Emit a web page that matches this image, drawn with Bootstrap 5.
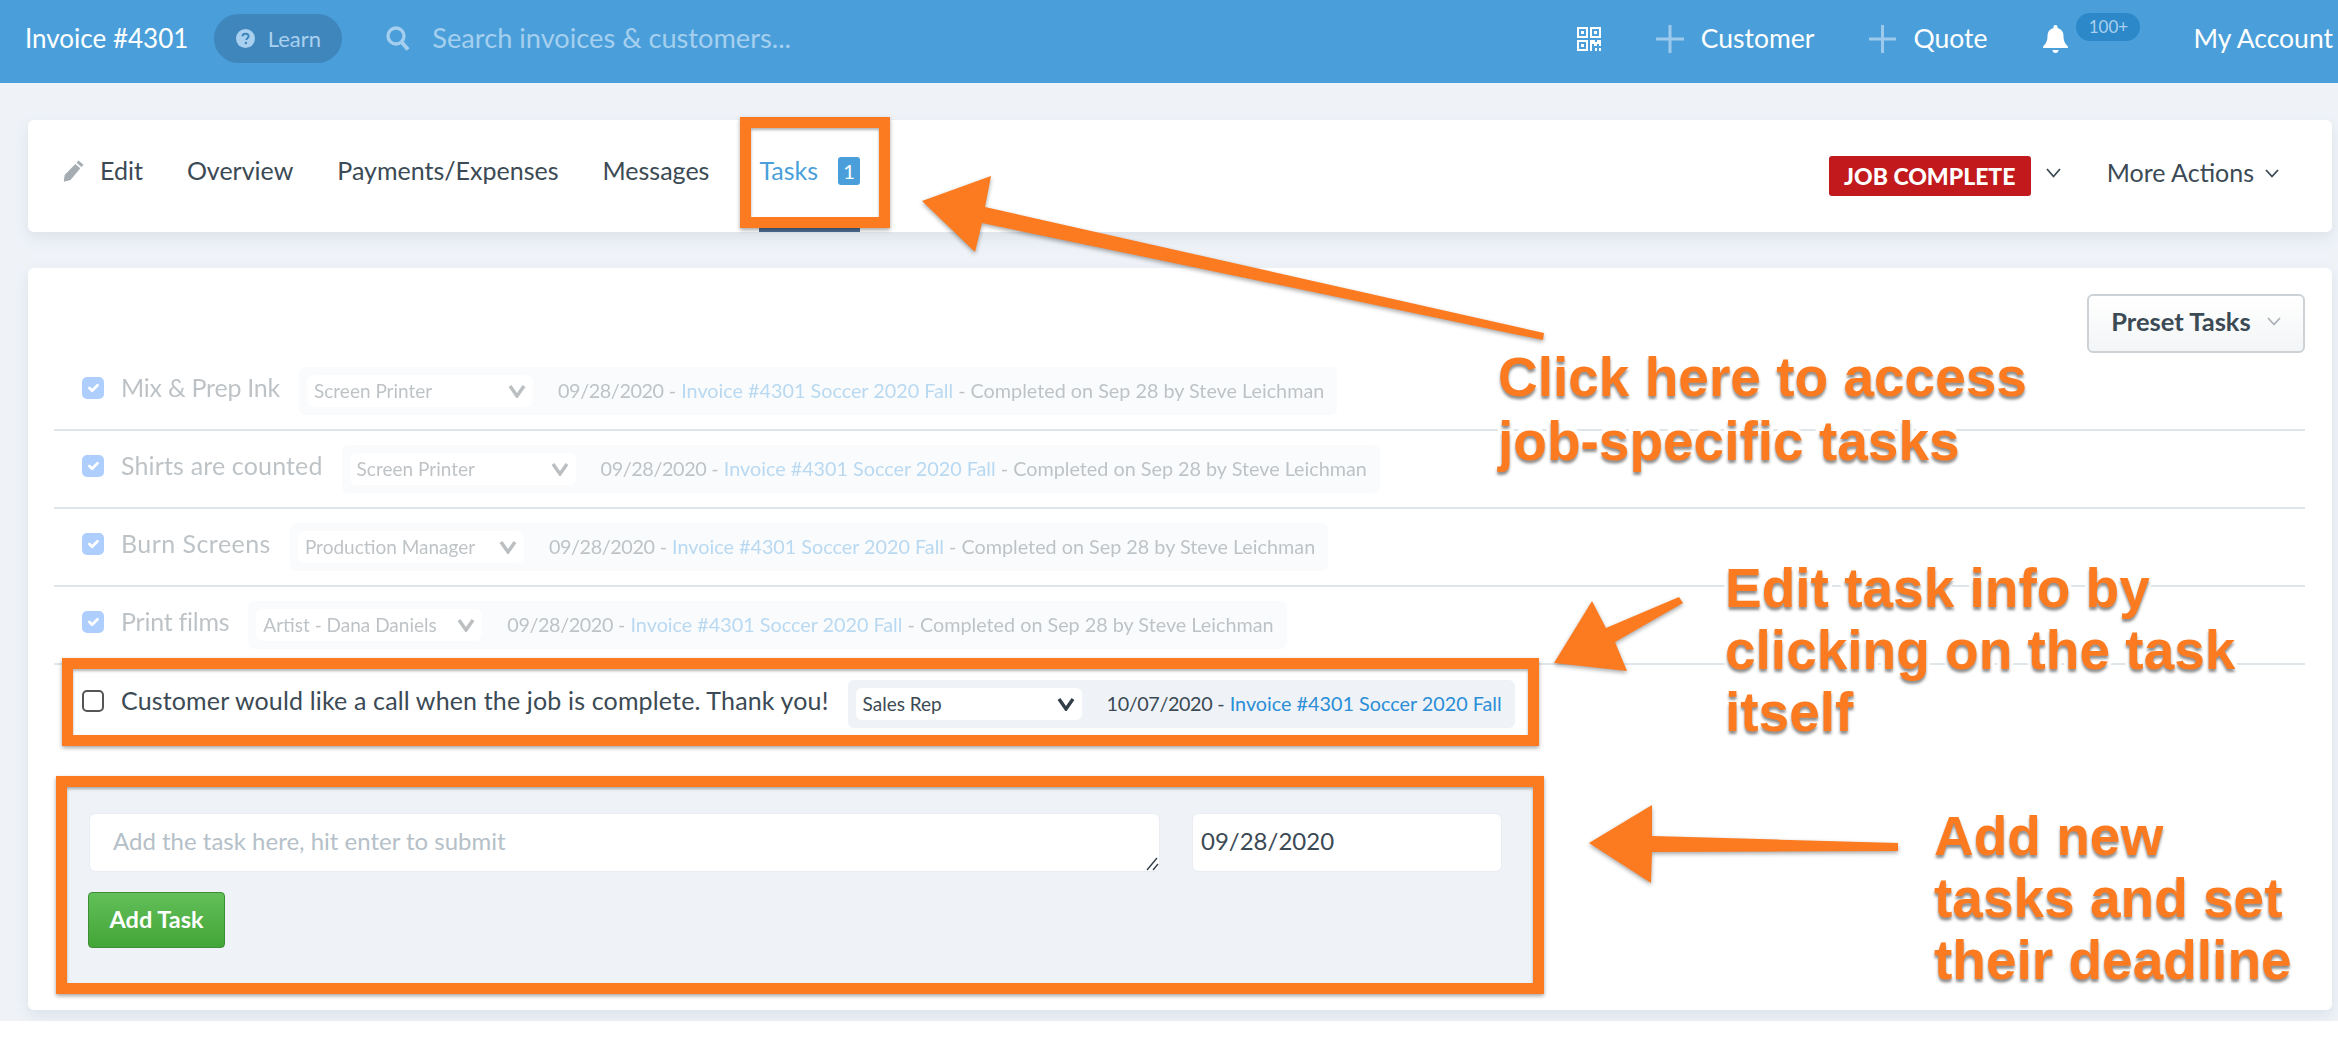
<!DOCTYPE html>
<html lang="en">
<head>
  <meta charset="UTF-8">
  <title>Invoice #4301 - Tasks</title>
  <meta name="viewport" content="width=device-width, initial-scale=1">
  <link href="https://cdn.jsdelivr.net/npm/bootstrap@5.3.0/dist/css/bootstrap.min.css" rel="stylesheet">
  <style>
    body {
      background: #fff;
      font-family: Lato, "Liberation Sans", sans-serif;
      color: #3b4a54;
      position: relative;
      overflow: hidden;
    }
    .page-wrap {
      background: #eff3f8;
      height: 1021px;
      overflow: hidden;
    }
    /* top bar */
    .top-bar {
      background: #4a9fda;
      height: 83px;
      padding: 0 5px 6px 25px;
      flex-wrap: nowrap;
    }
    .top-title { color: #fff; font-size: 26px; }
    .learn-pill {
      width: 128px;
      height: 49px;
      margin-left: 26px;
      border-radius: 25px;
      background: #3f86bd;
      color: #a9d0ee;
      font-size: 22px;
      gap: 13px;
    }
    .search-box { margin-left: 44px; gap: 22px; color: #a5cfee; font-size: 27.2px; }
    .top-item { color: #fff; font-size: 26.5px; gap: 17px; text-decoration: none; }
    .top-item:hover { color: #fff; }
    .top-add { margin-left: 55px; }
    .bell-wrap { margin-left: 56px; margin-right: 53px; position: relative; width: 97px; height: 28px; }
    .bell-count {
      position: absolute;
      left: 33px;
      top: -12px;
      width: 64px;
      height: 28px;
      border-radius: 14px;
      background: #2d88c9;
      color: #a9d0ee;
      font-size: 17px;
      line-height: 28px;
      text-align: center;
    }
    /* cards */
    .sub-card {
      margin: 37px 6px 0 28px;
      height: 112px;
      background: #fff;
      border-radius: 6px;
      box-shadow: 0 6px 14px rgba(120, 140, 160, .16);
      padding: 0 53px 0 35px;
    }
    .sub-tabs { gap: 44px; height: 100%; flex-wrap: nowrap; }
    .sub-link {
      padding: 0 0 6px;
      color: #3b4a54;
      font-size: 25px;
      height: 100%;
      display: flex;
      align-items: center;
      gap: 16px;
      border-bottom: 4px solid transparent;
    }
    .sub-link:hover { color: #3b4a54; }
    .sub-link.is-current {
      margin-left: 6px;
      gap: 20px;
      color: #4a9fda;
      border-bottom-color: #4d6f94;
    }
    .tab-count {
      width: 22px;
      height: 28px;
      border-radius: 3px;
      background: #4a9fda;
      color: #fff;
      font-size: 20px;
      line-height: 28px;
      text-align: center;
    }
    .job-status {
      width: 202px;
      height: 40px;
      background: #c1191c;
      border-radius: 3px;
      color: #fff;
      font-size: 23px;
      font-weight: 900;
      line-height: 40px;
      text-align: center;
    }
    .more-actions { color: #3b4a54; font-size: 25px; gap: 11px; margin-left: 46px; padding-bottom: 6px; }
    .job-caret { margin: 0 0 6px 15px; }
    .main-card {
      margin: 36px 6px 0 28px;
      height: 742px;
      background: #fff;
      border-radius: 6px;
      box-shadow: 0 6px 14px rgba(120, 140, 160, .16);
      padding: 26px 27px 0 26px;
    }
    .preset-btn.btn {
      width: 218px;
      height: 59px;
      padding: 0 0 4px;
      border: 2px solid #ccd2d6;
      border-radius: 6px;
      background: linear-gradient(#fff, #f3f5f6);
      color: #3b4a54;
      font-size: 25.5px;
      font-weight: 700;
      gap: 16px;
    }
    /* task rows */
    .task-row {
      height: 78px;
      padding-left: 28px;
      border-bottom: 2px solid #dfe6ea;
    }
    .task-row.last-row { border-bottom: 0; }
    .row-inner { gap: 19px; white-space: nowrap; }
    .is-done .row-inner { opacity: .33; }
    .task-check.form-check-input {
      width: 22px;
      height: 22px;
      margin: 0 -2px 6px 0;
      border: 2px solid #555;
      border-radius: 5px;
    }
    .task-check.form-check-input:checked { border-color: #0d6efd; }
    .task-text { font-size: 25px; letter-spacing: .15px; color: #3b4a54; padding-bottom: 6px; }
    .task-text.is-tight { letter-spacing: -.25px; }
    .task-text.is-loose { letter-spacing: .45px; }
    .task-meta {
      height: 48px;
      padding: 0 13px 0 8px;
      background: #eff3f8;
      border-radius: 6px;
      gap: 25px;
      font-size: 19.8px;
    }
    .task-date { letter-spacing: -.4px; }
    .task-meta a { color: #2b8ed6; text-decoration: none; }
    .role-select.form-select {
      width: 226px;
      height: 32px;
      padding: 0 30px 0 7px;
      border: 0;
      border-radius: 6px;
      font-size: 19px;
      color: #3b4a54;
      background-position: right 7px center;
      background-size: 18px 14px;
      background-image: url("data:image/svg+xml,%3csvg xmlns='http://www.w3.org/2000/svg' viewBox='0 0 18 14'%3e%3cpath fill='none' stroke='%23333f48' stroke-width='3.4' d='M2 2l7 10 7-10'/%3e%3c/svg%3e");
    }
    /* add form */
    .add-panel {
      width: 1488px;
      height: 218px;
      margin: 33px 0 0 2px;
      padding: 37px 0 0 33px;
      background: #eff3f8;
    }
    .add-fields { gap: 32px; }
    .add-task.form-control,
    .add-date.form-control {
      height: 59px;
      min-height: 59px;
      border: 1px solid #e9edf1;
      border-radius: 6px;
      font-size: 24px;
      color: #3b4a54;
    }
    .add-task.form-control { width: 1071px; padding: 9px 23px; resize: both; }
    .add-task.form-control::placeholder { color: #b5c0c8; }
    .add-task::-webkit-resizer {
      background: url("data:image/svg+xml,%3csvg xmlns='http://www.w3.org/2000/svg' viewBox='0 0 15 15'%3e%3cpath fill='none' stroke='%23333f48' stroke-width='1.4' d='M3 14L13 2M9 14l5-6'/%3e%3c/svg%3e") no-repeat center;
    }
    .add-date.form-control { width: 310px; padding: 0 8px 4px; }
    .add-btn.btn {
      display: block;
      width: 137px;
      height: 56px;
      margin: 20px 0 0 -1px;
      padding: 0;
      border: 1px solid #3d8f33;
      border-radius: 4px;
      background: linear-gradient(#62bf59, #43a537);
      color: #fff;
      font-size: 23.5px;
      font-weight: 700;
    }
    /* annotations drawn over the screenshot */
    .anno-layer { position: absolute; left: 0; top: 0; width: 2338px; height: 1040px; pointer-events: none; }
    .anno-frame {
      position: absolute;
      border: 11px solid #fd7b20;
      box-shadow: 0 2px 4px rgba(0, 0, 0, .35), inset 0 2px 3px rgba(0, 0, 0, .3);
    }
    .frame-tab { left: 740px; top: 117px; width: 150px; height: 111px; }
    .frame-task { left: 62px; top: 658px; width: 1477px; height: 88px; }
    .frame-add { left: 56px; top: 776px; width: 1488px; height: 218px; }
    .anno-arrows { position: absolute; left: 0; top: 0; filter: drop-shadow(0 2px 2px rgba(0, 0, 0, .35)); }
    .anno-text {
      position: absolute;
      margin: 0;
      color: #fd7b20;
      font-family: "Liberation Sans", Arial, sans-serif;
      font-weight: 700;
      font-size: 55px;
      line-height: 62px;
      white-space: nowrap;
      -webkit-text-stroke: 8px #fff;
      paint-order: stroke fill;
      text-shadow: 0 3px 3px rgba(0, 0, 0, .45);
    }
    .text-click { left: 1498px; top: 345px; line-height: 64px; }
    .text-edit { left: 1725px; top: 557px; }
    .text-add { left: 1934px; top: 805px; }
  </style>
</head>
<body>

<div class="page-wrap">

  <!-- Top bar -->
  <nav class="navbar top-bar">
    <div class="d-flex align-items-center">
      <span class="top-title">Invoice #4301</span>
      <span class="learn-pill d-flex align-items-center justify-content-center">
        <svg width="19" height="19" viewBox="0 0 19 19"><circle cx="9.5" cy="9.5" r="9.5" fill="#a9d0ee"/><path d="M6.4 7.3c.2-1.8 1.5-2.6 3.2-2.6 1.8 0 3 1 3 2.5 0 2-2.3 2.1-2.3 3.8" fill="none" stroke="#3f86bd" stroke-width="2"/><circle cx="9.9" cy="14" r="1.3" fill="#3f86bd"/></svg>
        Learn
      </span>
      <div class="search-box d-flex align-items-center">
        <svg width="24" height="25" viewBox="0 0 24 25"><circle cx="10" cy="10" r="8" fill="none" stroke="#a5cfee" stroke-width="3.4"/><path d="M15.5 16l6.5 7.5" stroke="#a5cfee" stroke-width="4"/></svg>
        <span>Search invoices &amp; customers...</span>
      </div>
    </div>
    <div class="d-flex align-items-center">
      <svg width="24" height="24" viewBox="0 0 24 24" fill="#fff">
        <path fill-rule="evenodd" d="M0 0h11v11H0zM2 2v7h7V2zM13 0h11v11H13zM15 2v7h7V2zM0 13h11v11H0zM2 15v7h7v-7z"/>
        <path d="M4 4h3v3H4zM17 4h3v3h-3zM4 17h3v3H4zM13 13h5v2h2v-2h4v6h-2v-2h-2v2h-3v-2h-2v7h-2zM18 21h2v3h-2zM22 21h2v3h-2z"/>
      </svg>
      <a class="top-item top-add d-flex align-items-center" href="#">
        <svg width="28" height="28" viewBox="0 0 28 28"><path d="M14 0v28M0 14h28" stroke="#9dcaec" stroke-width="3"/></svg>
        Customer
      </a>
      <a class="top-item top-add d-flex align-items-center" href="#">
        <svg width="27" height="28" viewBox="0 0 27 28"><path d="M13.5 0v28M0 14h27" stroke="#9dcaec" stroke-width="3"/></svg>
        Quote
      </a>
      <div class="bell-wrap">
        <svg width="25" height="28" viewBox="0 0 25 28"><path fill="#fff" d="M12.5 0c1.2 0 2 .8 2 2v1c4 1 6 4.300 6 8 0 5 1.500 7.500 4.500 10.500v1.500H0v-1.500C3 18.500 4.500 16 4.500 11c0-3.700 2-7 6-8V2c0-1.200.8-2 2-2z"/><path fill="#fff" d="M9.500 25h6c0 1.800-1.300 3-3 3s-3-1.200-3-3z"/></svg>
        <span class="bell-count">100+</span>
      </div>
      <a class="top-item" href="#">My Account</a>
    </div>
  </nav>

  <!-- Sub navigation -->
  <div class="sub-card d-flex justify-content-between align-items-stretch">
    <ul class="nav sub-tabs">
      <li class="nav-item">
        <a class="nav-link sub-link" href="#">
          <svg width="21" height="22" viewBox="0 0 21 22"><path fill="#a5adb2" d="M15.500.5l5 4.200-2 2.300-5-4.200zM12.300 4l5 4.200L7.500 20 .8 21.800 1.600 15z"/></svg>
          Edit
        </a>
      </li>
      <li class="nav-item"><a class="nav-link sub-link" href="#">Overview</a></li>
      <li class="nav-item"><a class="nav-link sub-link" href="#">Payments/Expenses</a></li>
      <li class="nav-item"><a class="nav-link sub-link" href="#">Messages</a></li>
      <li class="nav-item"><a class="nav-link sub-link is-current" href="#">Tasks <span class="tab-count">1</span></a></li>
    </ul>
    <div class="d-flex align-items-center">
      <span class="job-status">JOB COMPLETE</span>
      <svg class="job-caret" width="15" height="10" viewBox="0 0 15 10"><path d="M1 1l6.500 7.500L14 1" fill="none" stroke="#3b4a54" stroke-width="1.800"/></svg>
      <div class="more-actions d-flex align-items-center">
        More Actions
        <svg width="14" height="9" viewBox="0 0 14 9"><path d="M1 1l6 6.500L13 1" fill="none" stroke="#3b4a54" stroke-width="1.800"/></svg>
      </div>
    </div>
  </div>

  <!-- Tasks -->
  <div class="main-card">
    <div class="d-flex justify-content-end">
      <button type="button" class="btn preset-btn d-flex align-items-center justify-content-center">
        Preset Tasks
        <svg width="14" height="9" viewBox="0 0 14 9"><path d="M1 1l6 6.500L13 1" fill="none" stroke="#aab3b9" stroke-width="1.800"/></svg>
      </button>
    </div>

    <div class="task-row is-done d-flex align-items-center">
      <div class="row-inner d-flex align-items-center">
        <input class="form-check-input task-check" type="checkbox" checked>
        <span class="task-text is-tight">Mix &amp; Prep Ink</span>
        <div class="task-meta d-flex align-items-center">
          <select class="form-select role-select"><option>Screen Printer</option></select>
          <span><span class="task-date">09/28/2020</span> - <a href="#">Invoice #4301 Soccer 2020 Fall</a> - Completed on Sep 28 by Steve Leichman</span>
        </div>
      </div>
    </div>
    <div class="task-row is-done d-flex align-items-center">
      <div class="row-inner d-flex align-items-center">
        <input class="form-check-input task-check" type="checkbox" checked>
        <span class="task-text">Shirts are counted</span>
        <div class="task-meta d-flex align-items-center">
          <select class="form-select role-select"><option>Screen Printer</option></select>
          <span><span class="task-date">09/28/2020</span> - <a href="#">Invoice #4301 Soccer 2020 Fall</a> - Completed on Sep 28 by Steve Leichman</span>
        </div>
      </div>
    </div>
    <div class="task-row is-done d-flex align-items-center">
      <div class="row-inner d-flex align-items-center">
        <input class="form-check-input task-check" type="checkbox" checked>
        <span class="task-text is-loose">Burn Screens</span>
        <div class="task-meta d-flex align-items-center">
          <select class="form-select role-select"><option>Production Manager</option></select>
          <span><span class="task-date">09/28/2020</span> - <a href="#">Invoice #4301 Soccer 2020 Fall</a> - Completed on Sep 28 by Steve Leichman</span>
        </div>
      </div>
    </div>
    <div class="task-row is-done d-flex align-items-center">
      <div class="row-inner d-flex align-items-center">
        <input class="form-check-input task-check" type="checkbox" checked>
        <span class="task-text is-tight">Print films</span>
        <div class="task-meta d-flex align-items-center">
          <select class="form-select role-select"><option>Artist - Dana Daniels</option></select>
          <span><span class="task-date">09/28/2020</span> - <a href="#">Invoice #4301 Soccer 2020 Fall</a> - Completed on Sep 28 by Steve Leichman</span>
        </div>
      </div>
    </div>
    <div class="task-row last-row d-flex align-items-center">
      <div class="row-inner d-flex align-items-center">
        <input class="form-check-input task-check" type="checkbox">
        <span class="task-text">Customer would like a call when the job is complete. Thank you!</span>
        <div class="task-meta d-flex align-items-center">
          <select class="form-select role-select"><option>Sales Rep</option></select>
          <span><span class="task-date">10/07/2020</span> - <a href="#">Invoice #4301 Soccer 2020 Fall</a></span>
        </div>
      </div>
    </div>

    <form class="add-panel">
      <div class="add-fields d-flex">
        <textarea class="form-control add-task" placeholder="Add the task here, hit enter to submit"></textarea>
        <input type="text" class="form-control add-date" value="09/28/2020">
      </div>
      <button type="button" class="btn add-btn">Add Task</button>
    </form>
  </div>
</div>

<!-- Annotations -->
<div class="anno-layer">
  <div class="anno-frame frame-tab"></div>
  <div class="anno-frame frame-task"></div>
  <div class="anno-frame frame-add"></div>
  <svg class="anno-arrows" width="2338" height="1040" viewBox="0 0 2338 1040" fill="#fd7b20">
    <polygon points="922,201 991,176 985,207 1544,333 1543,340 982,223 975,252"/>
    <polygon points="1554,663 1592,601 1606,628 1679,597 1683,603 1615,642 1627,671"/>
    <polygon points="1589,843 1652,805 1652,836 1898,843 1898,851 1652,852 1651,883"/>
  </svg>
  <p class="anno-text text-click">Click here to access<br>job-specific tasks</p>
  <p class="anno-text text-edit">Edit task info by<br>clicking on the task<br>itself</p>
  <p class="anno-text text-add">Add new<br>tasks and set<br>their deadline</p>
</div>

<script src="https://cdn.jsdelivr.net/npm/bootstrap@5.3.0/dist/js/bootstrap.bundle.min.js"></script>
</body>
</html>
